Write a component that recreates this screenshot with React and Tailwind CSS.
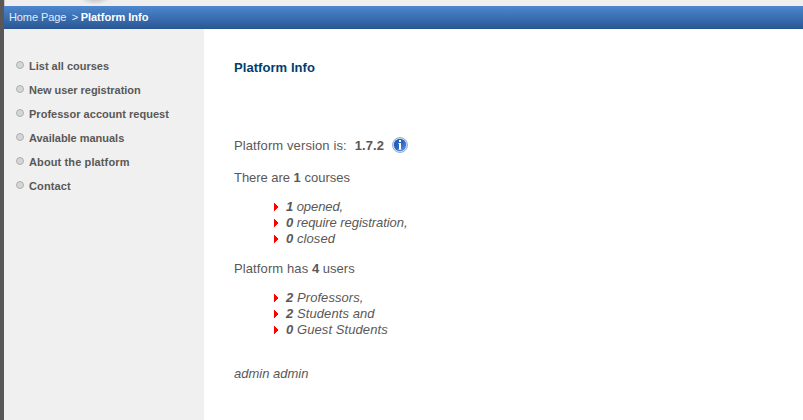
const links = [
  ["List all courses", "tracking-normal"],
  ["New user registration", "tracking-[-0.04px]"],
  ["Professor account request", "tracking-[0.02px]"],
  ["Available manuals", "tracking-[-0.02px]"],
  ["About the platform", "tracking-[0.12px]"],
  ["Contact", "tracking-[0.12px]"],
];

function Stats({ items }) {
  return (
    <ul className="ml-10 italic leading-4">
      {items.map(([count, label, tracking]) => (
        <li key={label} className="flex items-center">
          <svg className="mr-2 h-2 w-1 shrink-0" viewBox="0 0 4 8" shapeRendering="crispEdges">
            <path d="M0 0h1v1h1v1h1v1h1v2h-1v1h-1v1h-1v1h-1z" fill="#ff0000" />
          </svg>
          <span className={tracking}>
            <b>{count}</b> {label}
          </span>
        </li>
      ))}
    </ul>
  );
}

function InfoIcon() {
  return (
    <svg className="ml-2 size-4 -translate-y-px" viewBox="0 0 16 16">
      <defs>
        <linearGradient id="info" x1="0" y1="0" x2="1" y2="1">
          <stop offset="0" stopColor="#1f58b5" />
          <stop offset="0.5" stopColor="#2a66be" />
          <stop offset="1" stopColor="#5e9be8" />
        </linearGradient>
      </defs>
      <circle cx="8" cy="8" r="7.5" fill="#dce5f2" stroke="#89a5d1" strokeWidth="0.9" />
      <circle cx="8" cy="8" r="6.2" fill="url(#info)" />
      <path d="M7 3h2v2H7zM6.5 6H9v6h.5v.8h-3V12H7V7h-.5z" fill="#fff" />
    </svg>
  );
}

export default function App() {
  return (
    <div className="flex h-[420px] w-[803px] overflow-hidden bg-white font-['Liberation_Sans',Arial,sans-serif] text-[13px] text-[#5a5856]">
      <div className="w-1 shrink-0 bg-[#5a5856]" />
      <div className="flex min-w-0 flex-1 flex-col">
        <div className="h-1.5 shrink-0 overflow-hidden border-l border-[#c8c8c8] bg-[#eee]">
          <div className="-mt-[11px] ml-[74px] h-4 w-8 bg-[radial-gradient(ellipse_at_center,#aaa_0%,#cecece_30%,#eee_70%)]" />
        </div>
        <header className="flex h-[23px] shrink-0 items-center border-b border-[#29538e] bg-linear-to-b from-[#4c87ce] to-[#2b5998] pl-[5px] text-[11px] text-[#e2edf9]">
          <span className="tracking-[-0.1px]">Home Page</span>
          <span className="ml-[5.5px] mr-[2.5px]">&gt;</span>
          <b className="tracking-[-0.01px] text-white">Platform Info</b>
        </header>
        <div className="flex min-h-0 flex-1">
          <nav className="w-[200px] shrink-0 bg-[#f0f0f0] pl-3 pt-[25px] text-[11px] font-bold">
            {links.map(([link, tracking]) => (
              <a key={link} className="flex h-6 items-center">
                <span className="mr-[5px] size-2 -translate-y-px rounded-full border border-[#b0b0b0] bg-[#d5d5d5]" />
                <span className={tracking}>{link}</span>
              </a>
            ))}
          </nav>
          <main className="flex-1 pl-[30px] pt-[31px] leading-4">
            <h1 className="font-bold tracking-[0.06px] text-[#00406f]">Platform Info</h1>
            <div className="mt-[62px] flex h-4 items-center">
              <span className="tracking-[0.11px]">Platform version is:</span>
              <b className="ml-2 tracking-[0.1px]">1.7.2</b>
              <InfoIcon />
            </div>
            <p className="mb-[13px] mt-4">
              <span className="tracking-[-0.04px]">There are </span>
              <b>1</b> courses
            </p>
            <Stats
              items={[
                ["1", "opened,", "tracking-[-0.08px]"],
                ["0", "require registration,", "tracking-[-0.06px]"],
                ["0", "closed", "tracking-[0.08px]"],
              ]}
            />
            <p className="mb-[13px] mt-[14px]">
              <span className="tracking-[0.11px]">Platform has </span>
              <b>4</b> users
            </p>
            <Stats
              items={[
                ["2", "Professors,", "tracking-[0.07px]"],
                ["2", "Students and", "tracking-[0.08px]"],
                ["0", "Guest Students", "tracking-[0.08px]"],
              ]}
            />
            <p className="mt-7 italic">admin admin</p>
          </main>
        </div>
      </div>
    </div>
  );
}
